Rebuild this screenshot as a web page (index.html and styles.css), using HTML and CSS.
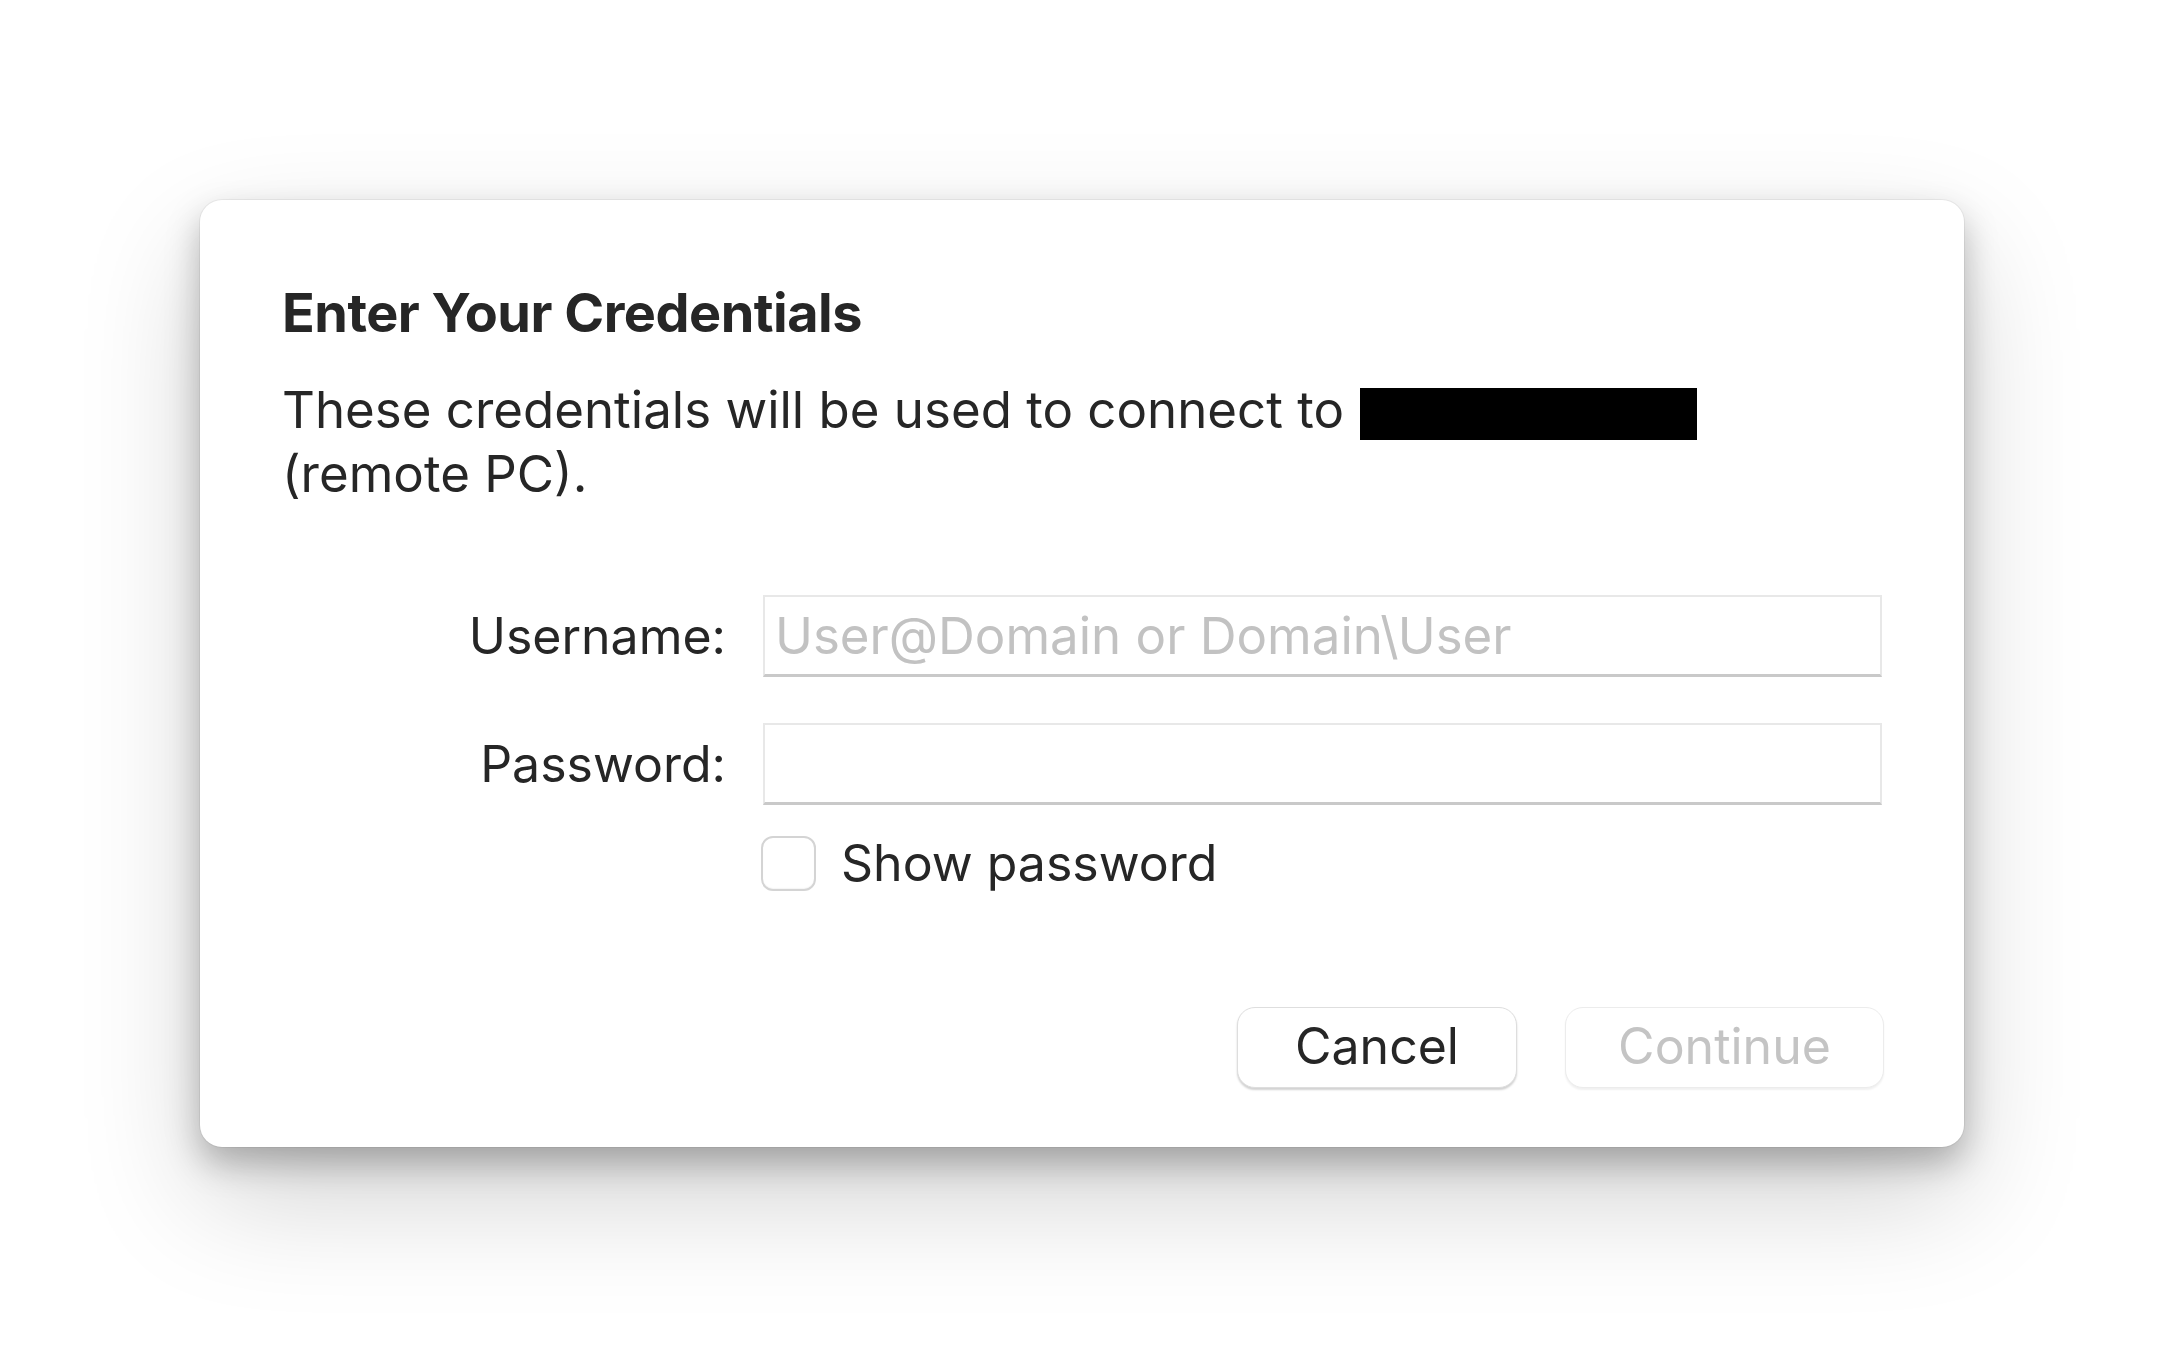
FILE: index.html
```html
<!DOCTYPE html>
<html lang="en">
<head>
<meta charset="utf-8">
<title>Enter Your Credentials</title>
<link rel="stylesheet" href="styles.css">
</head>
<body>
<div class="stage">
  <div class="dialog">
    <h1 class="title">Enter Your Credentials</h1>
    <p class="message">These credentials will be used to connect to <span class="redacted"></span><br>(remote PC).</p>
    <div class="form">
      <label class="label" for="user">Username:</label>
      <input class="field" id="user" type="text" placeholder="User@Domain or Domain\User">
      <label class="label" for="pass">Password:</label>
      <input class="field" id="pass" type="password">
      <div class="spacer"></div>
      <label class="check">
        <span class="box"></span>
        <span class="check-text">Show password</span>
      </label>
    </div>
    <div class="buttons">
      <button class="btn btn-cancel">Cancel</button>
      <button class="btn btn-continue" disabled>Continue</button>
    </div>
  </div>
</div>
</body>
</html>
```

FILE: styles.css
```css
html, body {
  margin: 0;
  padding: 0;
  background: #ffffff;
}

body {
  font-family: "Inter", "Liberation Sans", sans-serif;
  color: #262626;
}

.stage {
  padding: 200px 200px 201px 200px;
}

.dialog {
  width: 1764px;
  box-sizing: border-box;
  padding: 81px 82px 59px 82px;
  background: #ffffff;
  border-radius: 22px;
  box-shadow:
    0 0 0 1px rgba(0, 0, 0, 0.05),
    0 16px 34px rgba(0, 0, 0, 0.26),
    0 50px 120px rgba(0, 0, 0, 0.18);
}

.title {
  margin: 0;
  font-size: 54px;
  line-height: 64px;
  font-weight: 700;
  letter-spacing: -0.5px;
  color: #262626;
}

.message {
  margin: 33px 0 0 0;
  font-size: 51px;
  line-height: 64px;
  font-weight: 400;
}

.redacted {
  display: inline-block;
  width: 337px;
  height: 52px;
  background: #000;
  vertical-align: -12px;
  margin-left: 2px;
}

.form {
  margin-top: 89px;
  display: grid;
  grid-template-columns: 444px 1fr;
  column-gap: 37px;
  row-gap: 46px;
  align-items: center;
}

.form .spacer {
  height: 1px;
}

.label {
  font-size: 50px;
  text-align: right;
  line-height: 82px;
}

.field {
  box-sizing: border-box;
  height: 82px;
  width: 100%;
  margin: 0;
  padding: 0 10px;
  border: 2px solid #e8e8e8;
  border-bottom: 3px solid #c9c9c9;
  border-radius: 0;
  background: #fff;
  font-family: inherit;
  font-size: 51px;
  color: #262626;
  outline: none;
}

.field::placeholder {
  color: #c2c2c2;
}

.check {
  grid-column: 2;
  margin-top: -15px;
  display: flex;
  align-items: center;
  gap: 25px;
}

.box {
  box-sizing: border-box;
  width: 55px;
  height: 55px;
  margin-left: -2px;
  border: 2px solid #d4d4d4;
  border-radius: 12px;
  background: #fff;
  box-shadow: inset 0 -1px 1px rgba(0, 0, 0, 0.04);
}

.check-text {
  font-size: 50px;
  line-height: 55px;
}

.buttons {
  margin-top: 116px;
  margin-right: -2px;
  display: flex;
  justify-content: flex-end;
  gap: 48px;
}

.btn {
  box-sizing: border-box;
  height: 81px;
  border-radius: 18px;
  background: #fff;
  font-family: inherit;
  font-size: 50px;
  line-height: 76px;
  padding: 0 0 5px 0;
}

.btn-cancel {
  width: 280px;
  color: #262626;
  border: 1px solid #dedede;
  box-shadow: 0 2px 2px rgba(0, 0, 0, 0.18);
}

.btn-continue {
  width: 319px;
  color: #c4c4c4;
  border: 1px solid #ececec;
  box-shadow: 0 2px 2px rgba(0, 0, 0, 0.06);
}
```
